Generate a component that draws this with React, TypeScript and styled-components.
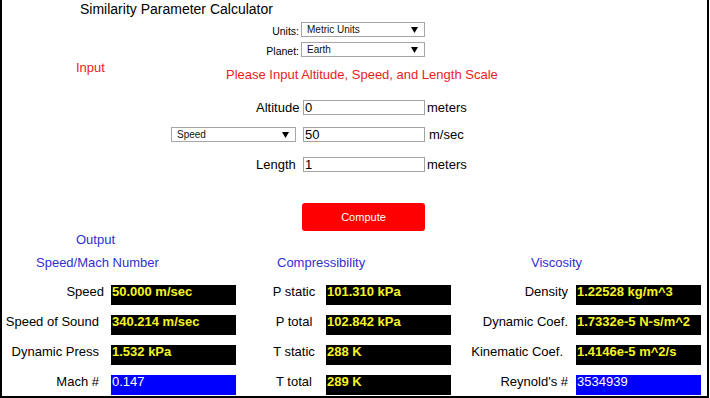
import { Fragment } from "react";
import styled, { createGlobalStyle } from "styled-components";

const GlobalStyle = createGlobalStyle`
  html, body {
    margin: 0;
    padding: 0;
    background: #fff;
  }
  body {
    font-family: "Liberation Sans", Arial, sans-serif;
    color: #000;
  }
`;

const Frame = styled.div`
  box-sizing: border-box;
  width: 709px;
  height: 398px;
  border: 2px solid #000;
  border-top: none;
  background: #fff;
`;

const Title = styled.div`
  padding: 1px 0 0 78px;
  font-size: 14px;
  line-height: 16px;
`;

const ControlRow = styled.div<{ $top: number }>`
  display: grid;
  grid-template-columns: 297px 124px;
  column-gap: 2px;
  align-items: end;
  margin-top: ${p => p.$top}px;
`;

const SmallLabel = styled.span`
  text-align: right;
  font-size: 10.5px;
  line-height: 12px;
`;

const SelectBox = styled.div<{ $width: number }>`
  box-sizing: border-box;
  width: ${p => p.$width}px;
  height: 15px;
  border: 1px solid #a6a6a6;
  background: #fff;
  display: flex;
  align-items: center;
  justify-content: space-between;
  padding: 0 6px 0 5px;
  font-size: 10px;
  line-height: 13px;
  color: #111;
`;

const Arrow = () => (
  <svg width="7" height="6" viewBox="0 0 7 6">
    <polygon points="0,0 7,0 3.5,6" fill="#000" />
  </svg>
);

const Heading = styled.div<{ $color: string; $top: number }>`
  font-size: 13px;
  line-height: 15px;
  color: ${p => p.$color};
  margin-top: ${p => p.$top}px;
`;

const InputHead = styled.div`
  display: grid;
  grid-template-columns: 150px auto;
  padding-left: 74px;
  margin-top: 3px;
`;

const Prompt = styled(Heading)`
  padding-top: 7px;
`;

const FieldRow = styled.div<{ $top: number }>`
  display: grid;
  grid-template-columns: 132px 122px auto;
  align-items: center;
  height: 15px;
  padding-left: 169px;
  margin-top: ${p => p.$top}px;
`;

const FieldLabel = styled.span`
  padding-left: 85px;
  font-size: 13px;
  line-height: 15px;
`;

const Unit = styled.span<{ $gap: number }>`
  padding-left: ${p => p.$gap}px;
  font-size: 13px;
  line-height: 15px;
`;

const TextField = styled.input`
  box-sizing: border-box;
  width: 122px;
  height: 15px;
  margin: 0;
  padding: 0 1px;
  border: 1px solid #a3a3a3;
  font-family: "Liberation Sans", Arial, sans-serif;
  font-size: 13px;
  color: #000;
  outline: none;
`;

const ComputeButton = styled.button`
  display: block;
  box-sizing: border-box;
  width: 123px;
  height: 28px;
  margin: 31px 0 0 300px;
  border: none;
  border-radius: 3px;
  background: #ff0000;
  color: #fff;
  font-family: "Liberation Sans", Arial, sans-serif;
  font-size: 11px;
`;

const OutputHead = styled(Heading)`
  padding-left: 74px;
`;

const Results = styled.div`
  display: flex;
  margin-top: 8px;
`;

const Group = styled.div<{ $offset: number; $labelWidth: number }>`
  display: grid;
  grid-template-columns: ${p => p.$labelWidth}px 125px;
  grid-auto-rows: 20px;
  row-gap: 10px;
  margin-left: ${p => p.$offset}px;
`;

const GroupTitle = styled.div<{ $indent: number }>`
  grid-column: 1 / -1;
  height: 27px;
  padding-left: ${p => p.$indent}px;
  font-size: 13px;
  line-height: 15px;
  color: #2f2fd0;
`;

const ResultLabel = styled.div<{ $align: string; $pad: number }>`
  text-align: ${p => p.$align};
  padding-right: ${p => p.$pad}px;
  font-size: 13px;
  line-height: 14px;
  white-space: nowrap;
`;

const ResultValue = styled.div<{ $highlight?: boolean }>`
  background: ${p => (p.$highlight ? "#0000ff" : "#000")};
  color: ${p => (p.$highlight ? "#fff" : "#f5f522")};
  font-size: 13px;
  font-weight: ${p => (p.$highlight ? "normal" : "bold")};
  line-height: 14px;
  padding: 0 1px;
  white-space: nowrap;
`;

type Row = { label: string; value: string; pad?: number; highlight?: boolean };

type GroupSpec = {
  title: string;
  indent: number;
  offset: number;
  labelWidth: number;
  align: string;
  pad: number;
  rows: Row[];
};

const groups: GroupSpec[] = [
  {
    title: "Speed/Mach Number",
    indent: 34,
    offset: 0,
    labelWidth: 109,
    align: "right",
    pad: 12,
    rows: [
      { label: "Speed", value: "50.000 m/sec", pad: 7 },
      { label: "Speed of Sound", value: "340.214 m/sec" },
      { label: "Dynamic Press", value: "1.532 kPa" },
      { label: "Mach #", value: "0.147", highlight: true },
    ],
  },
  {
    title: "Compressibility",
    indent: 15,
    offset: 26,
    labelWidth: 64,
    align: "center",
    pad: 0,
    rows: [
      { label: "P static", value: "101.310 kPa" },
      { label: "P total", value: "102.842 kPa" },
      { label: "T static", value: "288 K" },
      { label: "T total", value: "289 K" },
    ],
  },
  {
    title: "Viscosity",
    indent: 71,
    offset: 9,
    labelWidth: 116,
    align: "right",
    pad: 8,
    rows: [
      { label: "Density", value: "1.22528 kg/m^3" },
      { label: "Dynamic Coef.", value: "1.7332e-5 N-s/m^2" },
      { label: "Kinematic Coef.", value: "1.4146e-5 m^2/s", pad: 13 },
      { label: "Reynold's #", value: "3534939", highlight: true },
    ],
  },
];

export default function App() {
  return (
    <>
      <GlobalStyle />
      <Frame>
        <Title>Similarity Parameter Calculator</Title>

        <ControlRow $top={5}>
          <SmallLabel>Units:</SmallLabel>
          <SelectBox $width={124}>
            <span>Metric Units</span>
            <Arrow />
          </SelectBox>
        </ControlRow>
        <ControlRow $top={5}>
          <SmallLabel>Planet:</SmallLabel>
          <SelectBox $width={124}>
            <span>Earth</span>
            <Arrow />
          </SelectBox>
        </ControlRow>

        <InputHead>
          <Heading $color="#ec1c24" $top={0}>Input</Heading>
          <Prompt $color="#ec1c24" $top={0}>
            Please Input Altitude, Speed, and Length Scale
          </Prompt>
        </InputHead>

        <FieldRow $top={18}>
          <FieldLabel>Altitude</FieldLabel>
          <TextField defaultValue="0" />
          <Unit $gap={2}>meters</Unit>
        </FieldRow>
        <FieldRow $top={12}>
          <SelectBox $width={125}>
            <span>Speed</span>
            <Arrow />
          </SelectBox>
          <TextField defaultValue="50" />
          <Unit $gap={4}>m/sec</Unit>
        </FieldRow>
        <FieldRow $top={15}>
          <FieldLabel>Length</FieldLabel>
          <TextField defaultValue="1" />
          <Unit $gap={2}>meters</Unit>
        </FieldRow>

        <ComputeButton>Compute</ComputeButton>

        <OutputHead $color="#2f2fd0" $top={1}>Output</OutputHead>

        <Results>
          {groups.map(g => (
            <Group key={g.title} $offset={g.offset} $labelWidth={g.labelWidth}>
              <GroupTitle $indent={g.indent}>{g.title}</GroupTitle>
              {g.rows.map(r => (
                <Fragment key={r.label}>
                  <ResultLabel $align={g.align} $pad={r.pad ?? g.pad}>
                    {r.label}
                  </ResultLabel>
                  <ResultValue $highlight={r.highlight}>{r.value}</ResultValue>
                </Fragment>
              ))}
            </Group>
          ))}
        </Results>
      </Frame>
    </>
  );
}
